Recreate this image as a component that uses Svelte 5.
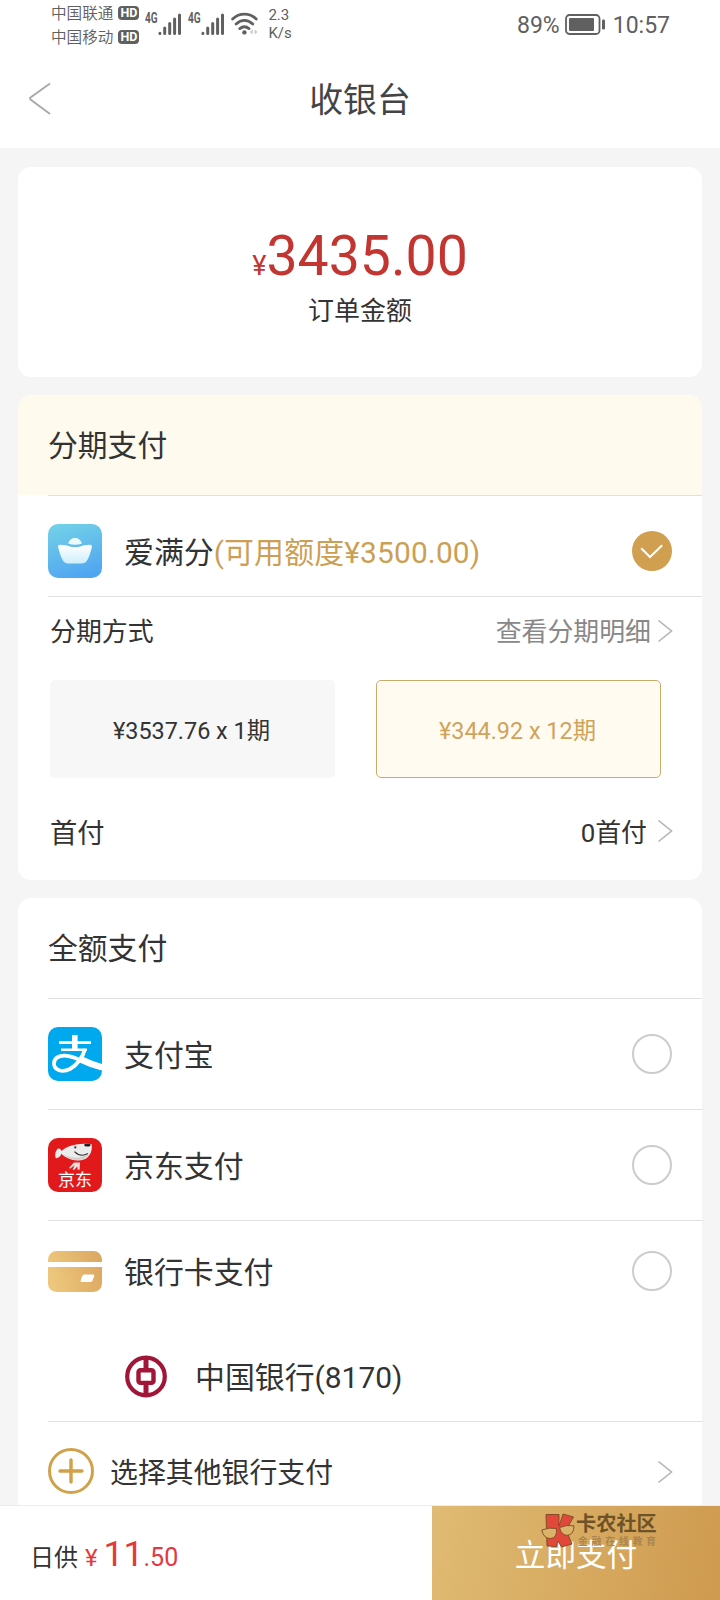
<script lang="ts">
  const carriers = ['中国联通', '中国移动'];

  const plans = [
    { amount: '¥3537.76', periods: 1 },
    { amount: '¥344.92', periods: 12 },
  ];
  let selectedPlan = $state(1);

  const methods = [
    { id: 'alipay', name: '支付宝' },
    { id: 'jd', name: '京东支付' },
    { id: 'bank', name: '银行卡支付' },
  ];
</script>

{#snippet arrow()}
  <svg class="arrow" width="16" height="24" viewBox="0 0 16 24">
    <path d="M1.5 1.5 L14.5 12 L1.5 22.5" fill="none" stroke="#b4b4b4" stroke-width="1.6" />
  </svg>
{/snippet}

{#snippet signal()}
  <span class="net">4G</span>
  <svg class="signal" width="24" height="23" viewBox="0 0 24 23" stroke="#606060" stroke-width="3" stroke-linecap="round">
    <path d="M1.9 20.3V20.5M6.7 15V20.5M11.7 10.5V20.5M16.6 6V20.5M21.5 2V20.5" />
  </svg>
{/snippet}

{#snippet methodIcon(id: string)}
  {#if id === 'alipay'}
    <svg class="method-icon" width="54" height="54" viewBox="0 0 54 54">
      <defs><clipPath id="alipay-clip"><rect width="54" height="54" rx="10" /></clipPath></defs>
      <g clip-path="url(#alipay-clip)" fill="none" stroke="#fff">
        <rect width="54" height="54" fill="#00a9ee" stroke="none" />
        <path d="M26.8 8V22" stroke-width="5.6" />
        <path d="M11 15.6H43" stroke-width="2.8" />
        <path d="M13 22.8H39" stroke-width="2.6" />
        <path d="M37 22C35 30 29 38 22 42C14 46 6 43 6 36.5C6 31 11 28.4 17 28.6C28 29 38 37 55 41.5" stroke-width="3.8" />
        <path d="M33 32.5C40 36 47 38.5 55 40.5" stroke-width="6.5" />
      </g>
    </svg>
  {:else if id === 'jd'}
    <svg class="method-icon" width="54" height="54" viewBox="0 0 54 54">
      <rect width="54" height="54" rx="10" fill="#e2191b" />
      <path d="M13.5 13C19 7.5 31 4.5 43.6 6.2C44.6 12 42.5 18.5 36.5 21.3C28 24.5 18.5 21 13.5 15.8C12.5 18.5 10 20.4 8 20.2C6.4 17.8 7.2 13 10 10.4C12 10.2 13.3 11.6 13.5 13Z" fill="#ececec" />
      <path d="M16 16.5C24 21 34 21 41.5 15C39 19.5 35 22 29 22.2C24 22.2 19 19.6 16 16.5Z" fill="#cfcfcf" />
      <path d="M26.5 13.6C30.5 17.6 35.6 18 39.8 15.6" fill="none" stroke="#333" stroke-width="1.2" />
      <ellipse cx="39.4" cy="7.2" rx="3.2" ry="1.4" fill="#222" />
      <circle cx="27.3" cy="9.4" r="1.1" fill="#333" />
      <path d="M26 24.6L32 24.4L31.6 31.8H29.8L29.2 28.4L26.4 31.8H24.6L26.6 27.2L22 30.8L21.2 29.8Z" fill="#f1dcda" />
      <text x="27" y="48" text-anchor="middle" class="jd-text">京东</text>
    </svg>
  {:else}
    <svg class="method-icon" width="54" height="41" viewBox="0 0 54 41">
      <defs>
        <linearGradient id="card-fill" x1="0" y1="0.2" x2="1" y2="0">
          <stop offset="0" stop-color="#ecc67c" />
          <stop offset="1" stop-color="#dca65f" />
        </linearGradient>
      </defs>
      <rect width="54" height="41" rx="8.5" fill="url(#card-fill)" />
      <rect y="11" width="54" height="5" fill="#fff" />
      <path d="M36.5 23.5H45Q46.8 23.5 46.3 25L44.5 29.5Q44 31 42.3 31H34Q32.2 31 32.6 29.5L34.2 25Q34.8 23.5 36.5 23.5Z" fill="#fff" />
    </svg>
  {/if}
{/snippet}

<div class="page">
  <div class="statusbar">
    <div class="carriers">
      {#each carriers as carrier}
        <div class="carrier">{carrier}<span class="hd">HD</span></div>
      {/each}
    </div>
    {@render signal()}
    {@render signal()}
    <svg class="wifi" width="27" height="24" viewBox="0 0 27 24" fill="none" stroke="#606060" stroke-width="2.8" stroke-linecap="round">
      <path d="M1.6 7C8.5 .6 18.3 .6 25.2 7M5.1 12C10.3 7.3 16.5 7.3 21.7 12M8.8 16.6C12 14 14.8 14 18 16.6" />
      <circle cx="13.4" cy="20.4" r="2.2" fill="#606060" stroke="none" />
      <path d="M21.8 17.5V22.5L18.6 20ZM23.6 17.5V22.5L26.8 20Z" fill="#ccc" stroke="none" />
    </svg>
    <div class="speed">2.3<br />K/s</div>
    <div class="battery-text">89%</div>
    <svg class="battery" width="41" height="22" viewBox="0 0 41 22">
      <rect x="1" y="1" width="33.5" height="19" rx="3.5" fill="none" stroke="#606060" stroke-width="1.8" />
      <rect x="4" y="4" width="25" height="13" rx="1" fill="#606060" />
      <rect x="37" y="5.5" width="3" height="10" rx="1.2" fill="#606060" />
    </svg>
    <div class="time">10:57</div>
  </div>

  <div class="navbar">
    <svg class="back" width="24" height="34" viewBox="0 0 24 34">
      <path d="M22 1.5L2.5 15.5Q1.5 16.5 2.5 17.5L22 32" fill="none" stroke="#a9a9a9" stroke-width="1.9" />
    </svg>
    <h1>收银台</h1>
  </div>

  <div class="content">
    <div class="card total">
      <div class="amount"><small>¥</small>3435.00</div>
      <div class="total-label">订单金额</div>
    </div>

    <div class="card">
      <div class="card-header card-header--highlight">分期支付</div>
      <div class="row row--credit">
        <svg class="method-icon" width="54" height="54" viewBox="0 0 54 54">
          <defs>
            <linearGradient id="credit-fill" x1="0.3" y1="0" x2="0.6" y2="1">
              <stop offset="0" stop-color="#72cfe8" />
              <stop offset="1" stop-color="#50a5f1" />
            </linearGradient>
            <linearGradient id="ingot-fill" x1="0" y1="0" x2="0" y2="1">
              <stop offset="0" stop-color="#fff" />
              <stop offset="1" stop-color="#cdeefb" />
            </linearGradient>
          </defs>
          <rect width="54" height="54" rx="10" fill="url(#credit-fill)" />
          <path d="M20.3 19.8C21.5 12 32.5 12 33.8 19.8Q27 21.6 20.3 19.8Z" fill="#eafaff" />
          <path d="M12 20.8Q19 21.2 21 22.2Q27 24 33 22.2Q35 21.2 42 20.8Q44.4 21 43.8 23.6Q41.5 33.5 38.2 37.8Q36.8 39.6 34 39.6H20Q17.2 39.6 15.8 37.8Q12.5 33.5 10.2 23.6Q9.6 21 12 20.8Z" fill="url(#ingot-fill)" />
        </svg>
        <span class="name">爱满分<em>(可用额度¥3500.00)</em></span>
        <svg class="radio" width="40" height="40" viewBox="0 0 40 40">
          <circle cx="20" cy="20" r="20" fill="#d09f50" />
          <path d="M9.2 17.3L18 26L30.2 14.2" fill="none" stroke="#fff" stroke-width="2" />
        </svg>
      </div>
      <div class="line">
        <span>分期方式</span>
        <span class="line-link">查看分期明细</span>
        {@render arrow()}
      </div>
      <div class="plans">
        {#each plans as plan, i}
          <button class="plan" class:plan--active={selectedPlan === i} onclick={() => (selectedPlan = i)}>
            {plan.amount} x {plan.periods}期
          </button>
        {/each}
      </div>
      <div class="line line--deposit">
        <span class="deposit-label">首付</span>
        <span class="line-value">0首付</span>
        {@render arrow()}
      </div>
    </div>

    <div class="card card--full">
      <div class="card-header">全额支付</div>
      {#each methods as method (method.id)}
        <div class="row" class:row--bank={method.id === 'bank'}>
          {@render methodIcon(method.id)}
          <span class="name">{method.name}</span>
          <span class="radio radio--empty"></span>
        </div>
      {/each}
      <div class="row row--sub">
        <svg class="boc" width="42" height="43" viewBox="0 0 42 43" fill="none" stroke="#a01538">
          <circle cx="21" cy="21.5" r="18.8" stroke-width="4.2" />
          <path d="M21 3V14M21 29V40" stroke-width="5" />
          <rect x="13.5" y="15.3" width="15" height="12.6" rx="2" stroke-width="4.4" />
        </svg>
        <span class="name">中国银行(8170)</span>
      </div>
      <div class="row row--other">
        <svg width="46" height="46" viewBox="0 0 46 46" fill="none" stroke="#d0a149">
          <circle cx="23" cy="23" r="21.5" stroke-width="3" />
          <path d="M23 12V34M12 23H34" stroke-width="3.4" stroke-linecap="round" />
        </svg>
        <span class="name">选择其他银行支付</span>
        {@render arrow()}
      </div>
    </div>
  </div>

  <div class="footer">
    <div class="daily">
      <span>日供</span>
      <span class="daily-sign">¥</span>
      <span class="daily-price"><b>11</b>.50</span>
    </div>
    <button class="pay">立即支付</button>
    <div class="watermark">
      <svg width="34" height="36" viewBox="0 0 34 36" stroke="#7a4a24" stroke-width="0.9">
        <path d="M5 1.5H18V13L22 1L32.5 4L25 17L31 31L20.5 34L17 28L15.5 33.5L6 33Z" fill="#e0483a" />
        <path d="M.8 17Q8 14 15.4 15.5Q16.5 25 9.5 25.5Q2.5 25.5 .8 17Z" fill="#dab268" />
        <path d="M18.6 14.5Q25.5 11.5 33 12.8Q33 21.8 26 22.4Q20 22 18.6 14.5Z" fill="#dab268" />
      </svg>
      <div class="watermark-text">
        <strong>卡农社区</strong>
        <span>金融在线教育</span>
      </div>
    </div>
  </div>
</div>

<style>
  :global(body) {
    margin: 0;
    background: #f5f5f5;
  }
  .page {
    display: flex;
    flex-direction: column;
    width: 720px;
    height: 1600px;
    overflow: hidden;
    background: #f5f5f5;
    color: #333;
    font-family: Roboto, "Noto Sans CJK SC", sans-serif;
  }
  button {
    margin: 0;
    padding: 0;
    border: 0;
    font-family: inherit;
  }

  /* status bar */
  .statusbar {
    display: flex;
    align-items: flex-start;
    box-sizing: border-box;
    height: 50px;
    padding: 0 50px 0 51px;
    background: #fff;
    color: #606060;
  }
  .carriers {
    margin-right: 6px;
  }
  .carrier {
    display: flex;
    align-items: center;
    height: 24px;
    font-size: 15.6px;
    font-weight: 350;
  }
  .hd {
    width: 21px;
    height: 14px;
    margin: 1px 0 0 5px;
    border-radius: 4px;
    background: #606060;
    color: #fff;
    font-size: 12.5px;
    font-weight: 700;
    line-height: 14.5px;
    text-align: center;
  }
  .net {
    width: 13px;
    margin-top: 12px;
    font-size: 14px;
    font-weight: 700;
    line-height: 12px;
    transform: scaleX(0.72);
    transform-origin: left;
  }
  .signal {
    margin: 13px 6px 0 0;
  }
  .wifi {
    margin-top: 12px;
  }
  .speed {
    margin: 6px 0 0 10px;
    font-size: 15px;
    line-height: 18px;
  }
  .battery-text {
    margin-left: auto;
    font-size: 23px;
    line-height: 51px;
  }
  .battery {
    margin: 14px 7px 0 5px;
  }
  .time {
    font-size: 23px;
    line-height: 51px;
  }

  .navbar {
    display: flex;
    align-items: center;
    height: 98px;
    padding: 0 28px;
    background: #fff;
  }
  .navbar h1 {
    flex: 1;
    margin: 0 24px 0 0;
    padding-top: 3px;
    color: #444;
    font-size: 33.8px;
    font-weight: 400;
    line-height: 40px;
    text-align: center;
  }

  .content {
    flex: 1;
    min-height: 0;
    padding: 19px 18px 0;
  }
  .card {
    margin-bottom: 18px;
    border-radius: 13px;
    background: #fff;
  }
  .card--full {
    height: 640px;
  }
  .card-header {
    display: flex;
    align-items: center;
    box-sizing: border-box;
    height: 100px;
    padding: 0 0 4px 30px;
    font-size: 29.8px;
  }
  .card-header--highlight {
    border-radius: 13px 13px 0 0;
    background: #fffaee;
  }

  .total {
    height: 210px;
    text-align: center;
  }
  .amount {
    padding-top: 57px;
    color: #c23531;
    font-size: 55.4px;
    line-height: 66px;
  }
  .amount small {
    font-size: 27px;
  }
  .total-label {
    margin-top: -6px;
    font-size: 26px;
    line-height: 36px;
  }

  .row {
    display: flex;
    align-items: center;
    box-sizing: border-box;
    height: 111px;
    margin: 0 -1px 0 30px;
    padding-right: 31px;
    border-top: 1px solid #e0e0e0;
  }
  .card-header + .row {
    margin-right: 0;
    padding-right: 30px;
  }
  .method-icon {
    margin-right: 22px;
  }
  .name {
    flex: 1;
    padding-top: 4px;
    font-size: 29.9px;
    line-height: 40px;
  }
  .name em {
    color: #cc9f55;
    font-style: normal;
    letter-spacing: 0.15px;
  }
  .radio {
    box-sizing: border-box;
    width: 40px;
    height: 40px;
  }
  .radio--empty {
    border: 2px solid #ccc;
    border-radius: 50%;
  }
  .row--credit {
    height: 102px;
    padding-top: 9px;
    border-bottom: 1px solid #e0e0e0;
  }
  .row--bank {
    height: 101px;
  }
  .row--sub {
    height: 100px;
    padding: 11px 0 0 77px;
    border-top: 0;
  }
  .row--sub .name {
    padding-top: 2px;
  }
  .boc {
    margin-right: 28px;
  }
  .row--other {
    height: 99px;
    padding-right: 30px;
  }
  .row--other .name {
    margin-left: 16px;
    padding-top: 6px;
    font-size: 27.9px;
  }
  .row--other .arrow {
    margin-top: 2px;
  }
  .jd-text {
    fill: #fff;
    font-size: 17px;
  }

  .line {
    display: flex;
    align-items: center;
    height: 68px;
    padding: 0 29px 0 32px;
    font-size: 25.9px;
  }
  .line span {
    margin-top: -4px;
  }
  .line-link,
  .line-value {
    margin-left: auto;
  }
  .line-link {
    margin-right: 6px;
    color: #888;
  }
  .line-value {
    margin-right: 10px;
  }
  .line--deposit {
    height: 102px;
  }
  .line--deposit span {
    margin-top: 3px;
  }
  .line--deposit .arrow {
    margin-top: 4px;
  }
  .line--deposit .deposit-label {
    font-size: 27.3px;
  }
  .plans {
    display: grid;
    grid-template-columns: 285px 285px;
    column-gap: 41px;
    padding: 15px 32px 0;
  }
  .plan {
    height: 98px;
    padding: 0 2px 1px 0;
    border-radius: 5px;
    background: #f7f7f7;
    color: #333;
    font-size: 23.4px;
  }
  .plan--active {
    border: 1px solid #c9ab6c;
    background: #fffbf0;
    color: #cfa35a;
  }

  .footer {
    position: relative;
    display: flex;
    height: 94px;
    background: #fff;
    box-shadow: 0 -1px #ececec;
  }
  .daily {
    display: flex;
    align-items: baseline;
    box-sizing: border-box;
    width: 432px;
    padding: 28px 0 0 30px;
    font-size: 24px;
    line-height: 40px;
  }
  .daily-sign {
    margin: 0 6px 0 7px;
    color: #e4393c;
  }
  .daily-price {
    color: #e4393c;
    font-size: 25px;
  }
  .daily-price b {
    font-size: 35.5px;
    font-weight: 400;
  }
  .pay {
    flex: 1;
    background: linear-gradient(100deg, #e0bb73, #ce9a4f);
    color: #fff;
    font-size: 30.6px;
  }
  .watermark {
    position: absolute;
    top: 7px;
    left: 541px;
    display: flex;
    gap: 1px;
    pointer-events: none;
  }
  .watermark-text {
    display: flex;
    flex-direction: column;
  }
  .watermark strong {
    color: #6e5228;
    font-size: 20.2px;
    font-weight: 700;
    line-height: 23px;
  }
  .watermark span {
    padding-left: 2px;
    color: #a9864f;
    font-size: 10px;
    font-weight: 700;
    letter-spacing: 3.6px;
    line-height: 11px;
  }
</style>
